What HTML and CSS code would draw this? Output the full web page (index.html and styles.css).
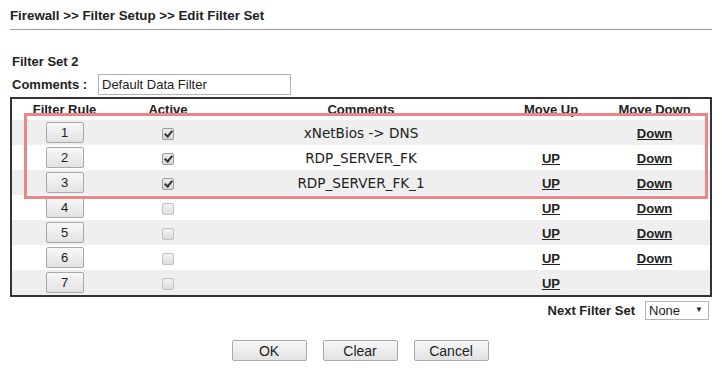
FILE: index.html
```html
<!DOCTYPE html>
<html lang="en">
  <head>
    <meta charset="utf-8" />
    <title>Edit Filter Set</title>
    <link rel="stylesheet" href="styles.css">
  </head>
  <body>
    <div class="title">Firewall &gt;&gt; Filter Setup &gt;&gt; Edit Filter Set</div>
    <hr class="rule">

    <div class="setname">Filter Set 2</div>
    <div class="comments">
      <label>Comments :</label>
      <input type="text" class="txt" value="Default Data Filter">
    </div>

    <div class="tablewrap">
      <table class="rules">
        <tr class="head">
          <th class="c-rule">Filter Rule</th>
          <th class="c-active">Active</th>
          <th class="c-comm">Comments</th>
          <th class="c-up">Move Up</th>
          <th class="c-down">Move Down</th>
        </tr>
        <tr class="odd">
          <td><button class="num">1</button></td>
          <td><input type="checkbox" class="chk" checked></td>
          <td>xNetBios -&gt; DNS</td>
          <td></td>
          <td><a href="#">Down</a></td>
        </tr>
        <tr>
          <td><button class="num">2</button></td>
          <td><input type="checkbox" class="chk" checked></td>
          <td>RDP_SERVER_FK</td>
          <td><a href="#">UP</a></td>
          <td><a href="#">Down</a></td>
        </tr>
        <tr class="odd">
          <td><button class="num">3</button></td>
          <td><input type="checkbox" class="chk" checked></td>
          <td>RDP_SERVER_FK_1</td>
          <td><a href="#">UP</a></td>
          <td><a href="#">Down</a></td>
        </tr>
        <tr>
          <td><button class="num">4</button></td>
          <td><input type="checkbox" class="chk"></td>
          <td></td>
          <td><a href="#">UP</a></td>
          <td><a href="#">Down</a></td>
        </tr>
        <tr class="odd">
          <td><button class="num">5</button></td>
          <td><input type="checkbox" class="chk"></td>
          <td></td>
          <td><a href="#">UP</a></td>
          <td><a href="#">Down</a></td>
        </tr>
        <tr>
          <td><button class="num">6</button></td>
          <td><input type="checkbox" class="chk"></td>
          <td></td>
          <td><a href="#">UP</a></td>
          <td><a href="#">Down</a></td>
        </tr>
        <tr class="odd">
          <td><button class="num">7</button></td>
          <td><input type="checkbox" class="chk"></td>
          <td></td>
          <td><a href="#">UP</a></td>
          <td></td>
        </tr>
      </table>
      <div class="highlight"></div>
    </div>

    <div class="next">
      <span class="next-label">Next Filter Set</span>
      <span class="selwrap">
        <select class="sel"><option>None</option></select>
      </span>
    </div>

    <div class="actions">
      <button class="btn">OK</button>
      <button class="btn">Clear</button>
      <button class="btn">Cancel</button>
    </div>
  </body>
</html>
```

FILE: styles.css
```css
body {
  margin: 0;
  padding: 0 10px 0 10px;
  background: #fff;
  color: #222;
  font-family: "Liberation Sans", Arial, sans-serif;
  font-size: 13px;
}

.title {
  font-weight: bold;
  font-size: 13.3px;
  padding-top: 8px;
  height: 17px;
}

.rule {
  margin: 4px 0 0 0;
  border: 0;
  border-top: 1px solid #9a9a9a;
}

.setname {
  font-weight: bold;
  margin: 24px 0 0 2px;
  height: 16px;
}

.comments {
  display: flex;
  align-items: center;
  margin: 3px 0 0 2px;
  height: 22px;
}

.comments label {
  font-weight: bold;
  width: 86px;
}

.txt {
  width: 193px;
  height: 21px;
  box-sizing: border-box;
  border: 1px solid #b4b4b4;
  padding: 0 3px;
  font-family: "Liberation Sans", Arial, sans-serif;
  font-size: 13px;
  color: #222;
}

.tablewrap {
  position: relative;
  width: 698px;
  margin-top: 2px;
  border: 2px solid #333;
}

.rules {
  width: 698px;
  table-layout: fixed;
  border-collapse: collapse;
}

.rules th {
  font-weight: bold;
  font-size: 13px;
  height: 17px;
  padding: 4px 0 0 0;
  line-height: 13px;
  vertical-align: top;
}

.rules td {
  height: 25px;
  padding: 0;
  text-align: center;
  font-family: "DejaVu Sans", Verdana, sans-serif;
  font-size: 13.6px;
}

.rules tr.odd td {
  background: #efefef;
}

.c-rule { width: 105px; }
.c-active { width: 102px; }
.c-comm { width: 284px; }
.c-up { width: 96px; }
.c-down { width: 111px; }

.rules a {
  color: #222;
  font-family: "Liberation Sans", Arial, sans-serif;
  font-size: 13px;
  font-weight: bold;
  text-decoration: underline;
}

.num {
  width: 38px;
  height: 21px;
  padding: 0;
  border: 1px solid #a8a8a8;
  border-radius: 2px;
  background: linear-gradient(#f8f8f8, #e2e2e2);
  font-family: "Liberation Sans", Arial, sans-serif;
  font-size: 13px;
  color: #222;
  vertical-align: middle;
}

.chk {
  appearance: none;
  position: relative;
  width: 12px;
  height: 12px;
  margin: 0;
  vertical-align: middle;
  border: 1px solid #c2c2c2;
  border-radius: 2px;
  background: linear-gradient(#f2f2f2, #dcdcdc);
}

.chk:checked {
  border-color: #9c9c9c;
  background: linear-gradient(#ececec, #d6d6d6);
}

.chk:checked::after {
  content: "";
  position: absolute;
  left: 3px;
  top: 0px;
  width: 3px;
  height: 6px;
  border: solid #333;
  border-width: 0 2px 2px 0;
  transform: rotate(40deg);
}

.highlight {
  position: absolute;
  left: 12px;
  top: 14px;
  width: 678px;
  height: 80px;
  border: 3px solid #ec8586;
  pointer-events: none;
}

.next {
  display: flex;
  justify-content: flex-end;
  align-items: center;
  gap: 10px;
  margin-top: 4px;
  height: 19px;
}

.next-label {
  font-weight: bold;
}

.selwrap {
  position: relative;
  margin-right: 3px;
}

.sel {
  appearance: none;
  display: block;
  width: 64px;
  height: 19px;
  border: 1px solid #b4b4b4;
  background: #fff;
  padding: 0 0 0 3px;
  font-family: "Liberation Sans", Arial, sans-serif;
  font-size: 13px;
  color: #222;
}

.selwrap::after {
  content: "\25BC";
  position: absolute;
  right: 6px;
  top: 4px;
  font-size: 8px;
  color: #222;
  pointer-events: none;
}

.actions {
  display: flex;
  justify-content: center;
  gap: 16px;
  margin-top: 20px;
  padding-right: 2px;
}

.btn {
  width: 75px;
  height: 21px;
  padding: 0;
  border: 1px solid #a8a8a8;
  border-radius: 2px;
  background: linear-gradient(#f8f8f8, #e2e2e2);
  font-family: "Liberation Sans", Arial, sans-serif;
  font-size: 14px;
  color: #222;
}
```
